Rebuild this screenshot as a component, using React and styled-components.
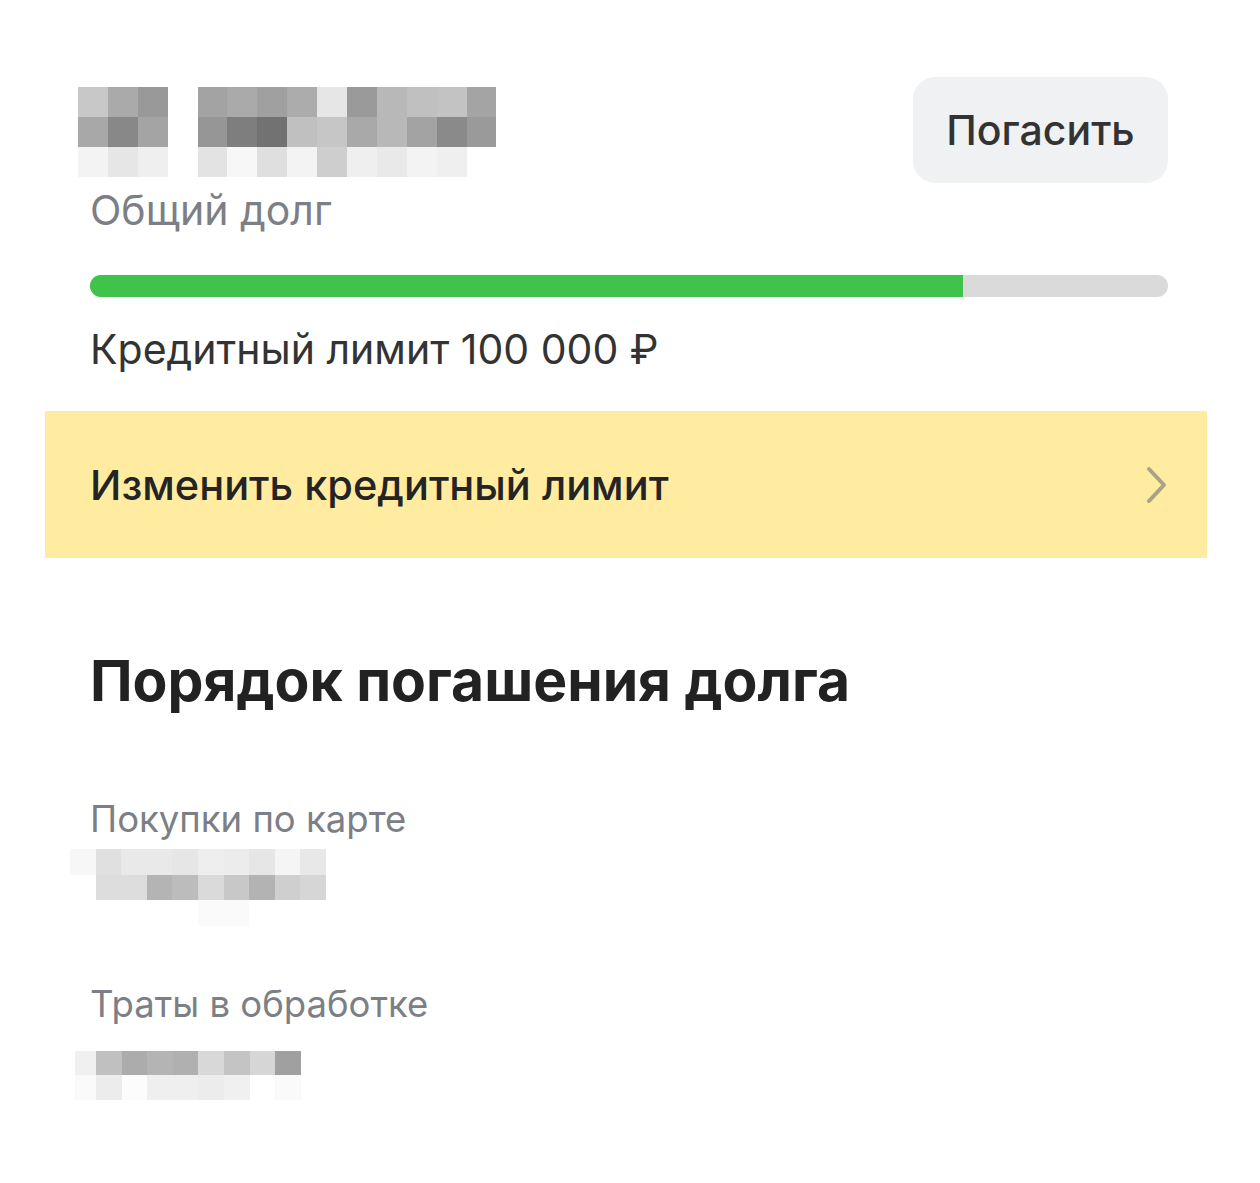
import styled, { createGlobalStyle } from "styled-components";

const GlobalStyle = createGlobalStyle`
  body {
    margin: 0;
    background: #ffffff;
    font-family: Inter, "Noto Sans", sans-serif;
    color: #333333;
  }
`;

const Screen = styled.div`
  width: 1162px;
  margin-left: 45px;
  padding-top: 77px;
  padding-bottom: 60px;
`;

const Section = styled.div`
  padding: 0 39px 0 45px;
`;

const Header = styled.div`
  display: flex;
  justify-content: space-between;
  align-items: flex-start;
`;

const HeaderLeft = styled.div`
  display: flex;
  flex-direction: column;
  padding-top: 10px;
`;

const Mosaic = styled.div`
  display: grid;
  grid-template-columns: ${(p) => p.$cols};
  grid-auto-rows: ${(p) => p.$rowHeight}px;
  margin-left: ${(p) => p.$shift}px;
  margin-top: ${(p) => p.$top || 0}px;
`;

const Cell = styled.div`
  background: ${(p) => p.$color || "transparent"};
`;

const Label = styled.div`
  font-size: ${(p) => p.$size || 36.5}px;
  line-height: 48px;
  color: #7c7f86;
  margin-top: ${(p) => p.$top || 0}px;
`;

const PayButton = styled.button`
  width: 255px;
  height: 106px;
  border: none;
  border-radius: 22px;
  background: #f0f1f3;
  font-family: inherit;
  font-size: 41px;
  font-weight: 500;
  color: #333333;
  cursor: pointer;
`;

const Progress = styled.div`
  margin-top: 41px;
  height: 22px;
  border-radius: 11px;
  background: #dadada;
  overflow: hidden;
`;

const ProgressFill = styled.div`
  height: 100%;
  background: #3fc34b;
`;

const LimitText = styled.div`
  margin-top: 28px;
  font-size: 41px;
  line-height: 48px;
  color: #333333;
`;

const LimitBanner = styled.div`
  margin-top: 38px;
  height: 147px;
  padding: 0 39px 0 45px;
  background: #ffeca1;
  display: flex;
  align-items: center;
  justify-content: space-between;
  cursor: pointer;
`;

const BannerText = styled.div`
  font-size: 41.5px;
  line-height: 48px;
  font-weight: 500;
  color: #242424;
`;

const Heading = styled.h2`
  margin: 91px 0 0;
  font-size: 57px;
  line-height: 64px;
  font-weight: 700;
  color: #222222;
`;

const Row = styled.div`
  display: flex;
  flex-direction: column;
  margin-top: ${(p) => p.$top}px;
`;

const top = [
  ["#c8c8c8", "#aaaaaa", "#999999", null, "#a3a3a3", "#aaaaaa", "#a0a0a0", "#acacac", "#e6e6e6", "#9a9a9a", "#b8b8b8", "#c0c0c0", "#c3c3c3", "#a4a4a4"],
  ["#a8a8a8", "#888888", "#a4a4a4", null, "#969696", "#7e7e7e", "#727272", "#c0c0c0", "#c6c6c6", "#a9a9a9", "#b8b8b8", "#a3a3a3", "#8a8a8a", "#9a9a9a"],
  ["#f3f3f3", "#e6e6e6", "#efefef", null, "#e3e3e3", "#f7f7f7", "#dfdfdf", "#f3f3f3", "#cecece", "#efefef", "#e9e9e9", "#f3f3f3", "#efefef", null],
];

const purchases = [
  ["#f7f7f7", "#e0e0e0", "#e9e9e9", "#e9e9e9", "#e6e6e6", "#eeeeee", "#ececec", "#e6e6e6", "#f5f5f5", "#e8e8e8"],
  [null, "#dddddd", "#dddddd", "#b4b4b4", "#bcbcbc", "#dadada", "#c8c8c8", "#b3b3b3", "#cfcfcf", "#d6d6d6"],
  [null, null, null, null, null, "#fafafa", "#fafafa", null, null, null],
];

const pending = [
  ["#f0f0f0", "#c0c0c0", "#acacac", "#b4b4b4", "#b0b0b0", "#d8d8d8", "#c4c4c4", "#d6d6d6", "#a0a0a0"],
  ["#fafafa", "#ececec", "#fcfcfc", "#efefef", "#efefef", "#ececec", "#f0f0f0", null, "#fafafa"],
];

const Blur = ({ rows, cols, rowHeight, shift, top }) => (
  <Mosaic $cols={cols} $rowHeight={rowHeight} $shift={shift} $top={top}>
    {rows.flat().map((c, i) => (
      <Cell key={i} $color={c} />
    ))}
  </Mosaic>
);

const Chevron = () => (
  <svg width="22" height="38" viewBox="0 0 22 38" fill="none">
    <path
      d="M3 3 L18 19 L3 35"
      stroke="#a9a385"
      strokeWidth="4"
      strokeLinecap="round"
      strokeLinejoin="round"
    />
  </svg>
);

const App = () => {
  const used = 81;
  return (
    <>
      <GlobalStyle />
      <Screen>
        <Section>
          <Header>
            <HeaderLeft>
              <Blur rows={top} cols="repeat(14, 29.9px)" rowHeight={30} shift={-12} />
              <Label $size={41} $top={9}>Общий долг</Label>
            </HeaderLeft>
            <PayButton>Погасить</PayButton>
          </Header>
          <Progress>
            <ProgressFill style={{ width: `${used}%` }} />
          </Progress>
          <LimitText>Кредитный лимит 100 000 ₽</LimitText>
        </Section>
        <LimitBanner>
          <BannerText>Изменить кредитный лимит</BannerText>
          <Chevron />
        </LimitBanner>
        <Section>
          <Heading>Порядок погашения долга</Heading>
          <Row $top={82}>
            <Label>Покупки по карте</Label>
            <Blur rows={purchases} cols="repeat(10, 25.6px)" rowHeight={25.6} shift={-20} top={6} />
          </Row>
          <Row $top={54}>
            <Label>Траты в обработке</Label>
            <Blur rows={pending} cols="21px repeat(8, 25.6px)" rowHeight={24.5} shift={-15} top={23} />
          </Row>
        </Section>
      </Screen>
    </>
  );
};

export default App;
